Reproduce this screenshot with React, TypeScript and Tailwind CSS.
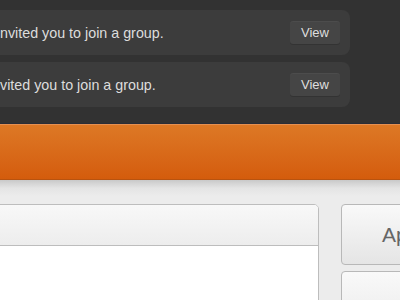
const invites = [
  { id: 1, indent: "pl-[56.8px]" },
  { id: 2, indent: "pl-[48.9px]" },
];

export default function App() {
  return (
    <div
      className="h-[300px] w-[400px] overflow-hidden bg-[#ececec]"
      style={{ fontFamily: '"Liberation Sans", Arial, sans-serif' }}
    >
      <section className="h-[124px] bg-[#323232] pt-[10px]">
        <div className="ml-[-60px] flex w-[410px] flex-col gap-[7px]">
          {invites.map((item) => (
            <div
              key={item.id}
              className={`flex h-[45px] items-center justify-between rounded-[8px] bg-[#3c3c3c] pr-[10px] ${item.indent}`}
            >
              <p className="whitespace-nowrap text-[14.3px] leading-4 text-[#dcdcdc]">
                invited you to join a group.
              </p>
              <button className="h-[23px] w-[50px] rounded-[3px] bg-[#454545] text-[13px] text-[#dedede] shadow-[0_1px_0_rgba(0,0,0,0.15),inset_0_1px_0_rgba(255,255,255,0.04)]">
                View
              </button>
            </div>
          ))}
        </div>
      </section>

      <div className="h-[56px] border-t border-t-[#e69050] border-b border-b-[#b8530f] bg-gradient-to-b from-[#dd7825] to-[#d45c0c] shadow-[0_0_0_1px_#2b2d36]" />

      <div className="h-[24px] bg-gradient-to-b from-[#c9c9c9] via-[#e4e4e4] to-[#ececec] [background-size:100%_16px] bg-no-repeat" />

      <div className="flex gap-[22px]">
        <div className="ml-[-20px] h-[120px] w-[339px] shrink-0 overflow-hidden rounded-t-[5px] border border-[#bdbdbd] bg-white">
          <div className="h-[41px] border-b border-[#bdbdbd] bg-gradient-to-b from-[#f8f8f8] to-[#ededed]" />
        </div>

        <div className="flex shrink-0 flex-col gap-[6px]">
          <button className="h-[61px] w-[100px] rounded-[4px] border border-[#b8b8b8] bg-gradient-to-b from-[#f9f9f9] to-[#e5e5e5] pl-[40px] text-left text-[21px] text-[#666666]">
            Apply
          </button>
          <button className="h-[82px] w-[100px] rounded-[4px] border border-[#b8b8b8] bg-gradient-to-b from-[#f9f9f9] to-[#e5e5e5] pl-[40px] text-left text-[21px] text-[#666666]">
            Decline
          </button>
        </div>
      </div>
    </div>
  );
}
